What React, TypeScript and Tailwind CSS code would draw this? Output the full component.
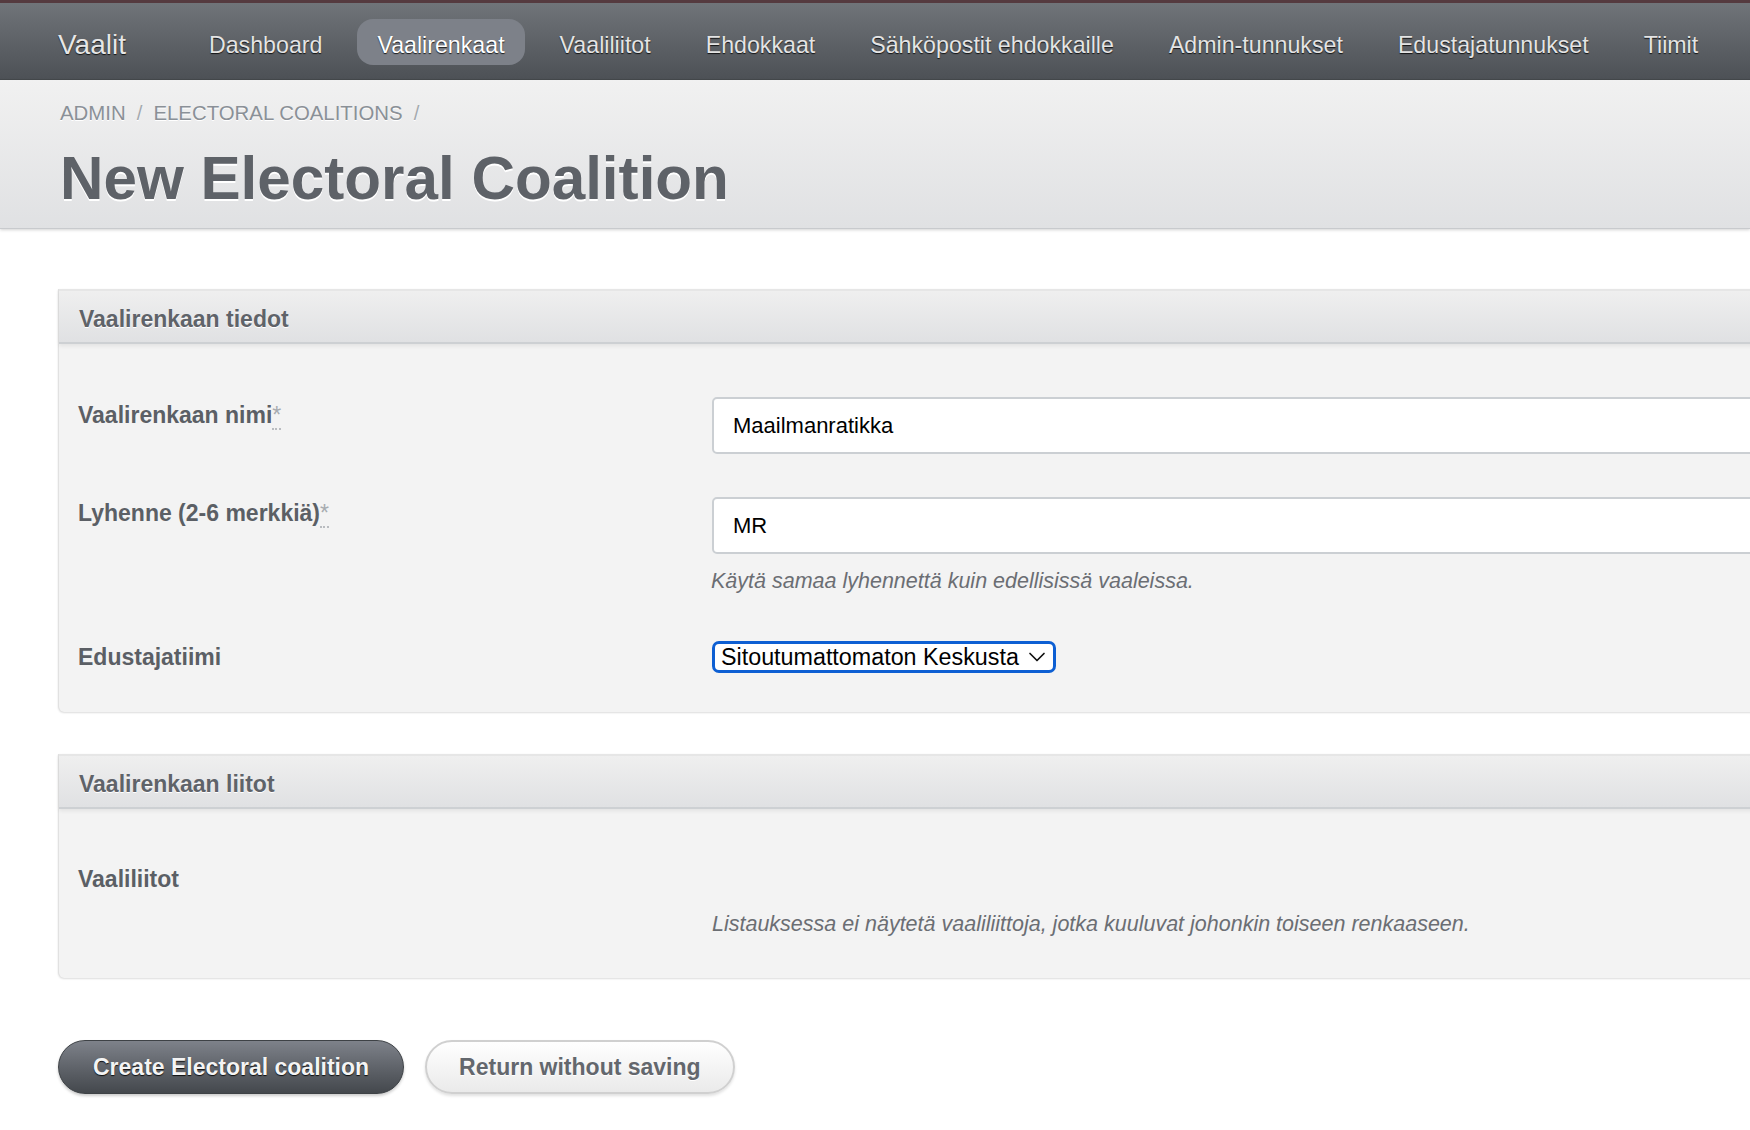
import React from "react";

const navItems = [
  "Dashboard",
  "Vaalirenkaat",
  "Vaaliliitot",
  "Ehdokkaat",
  "Sähköpostit ehdokkaille",
  "Admin-tunnukset",
  "Edustajatunnukset",
  "Tiimit",
];

const Label = ({ text, required }: { text: string; required?: boolean }) => (
  <div className="w-[634px] shrink-0 text-[23px] font-bold leading-[28px] text-[#5b5f65]">
    {text}
    {required && (
      <abbr
        title="required"
        className="no-underline font-normal text-[#a7abb0] border-b-2 border-dotted border-[#b9bcc0]"
      >
        *
      </abbr>
    )}
  </div>
);

const Panel = ({ title, children }: { title: string; children: React.ReactNode }) => (
  <section className="rounded-bl-[6px] bg-[#f3f3f3] border-l border-[#e1e1e1] shadow-[0_1px_2px_rgba(0,0,0,0.14)]">
    <h2 className="h-[55px] flex items-center pt-[5px] px-[20px] bg-linear-to-b from-[#efefef] to-[#e0e1e3] border-t-2 border-t-[#e6e6e6] border-b-2 border-b-[#cdd0d3] shadow-[0_2px_4px_rgba(0,0,0,0.07)] text-[23px] font-bold text-[#5f6369] [text-shadow:0_1px_0_#fff]">
      {title}
    </h2>
    {children}
  </section>
);

const TextInput = ({ value }: { value: string }) => (
  <input
    readOnly
    defaultValue={value}
    className="flex-1 h-[57px] rounded-[5px] border-2 border-[#cbcfd3] bg-white px-[19px] text-[22px] text-black outline-none"
  />
);

const App = () => {
  return (
    <div className="min-h-screen w-full overflow-hidden bg-white font-['Liberation_Sans',Arial,sans-serif]">
      {/* Top bar */}
      <nav className="h-[80px] border-t-[3px] border-[#553a3f] bg-linear-to-b from-[#707479] to-[#4d5156] border-b border-b-[#45494d] flex items-center pl-[58px] whitespace-nowrap">
        <span className="pt-[8px] text-[28px] text-[#e6e6e6] [text-shadow:0_1px_1px_rgba(0,0,0,0.8)]">Vaalit</span>
        <ul className="flex items-center gap-[15px] ml-[63px] pt-[2px]">
          {navItems.map((item) => (
            <li
              key={item}
              className={`h-[46px] flex items-center pt-[7px] px-[20px] rounded-[16px] text-[23.2px] [text-shadow:0_1px_1px_rgba(0,0,0,0.8)] ${
                item === "Vaalirenkaat" ? "bg-[#7d8189] text-white" : "text-[#e4e4e4]"
              }`}
            >
              {item}
            </li>
          ))}
        </ul>
      </nav>

      {/* Page header */}
      <header className="h-[149px] pt-[21px] pl-[60px] bg-linear-to-b from-[#f1f1f1] to-[#e0e1e3] border-b border-[#c8cacd] shadow-[0_1px_3px_rgba(0,0,0,0.18)]">
        <div className="flex items-center h-[24px] text-[20.4px] uppercase text-[#8a9097] [text-shadow:0_1px_0_#fff]">
          <span>Admin</span>
          <span className="mx-[11px] text-[#a4a9ae]">/</span>
          <span>Electoral coalitions</span>
          <span className="mx-[11px] text-[#a4a9ae]">/</span>
        </div>
        <h1 className="mt-[22px] text-[60.2px] leading-[64px] font-bold text-[#5e6268] [text-shadow:0_2px_0_#fff]">
          New Electoral Coalition
        </h1>
      </header>

      {/* Form */}
      <main className="pl-[58px] pt-[60px] pb-[40px]">
        <div className="w-[1720px]">
          <Panel title="Vaalirenkaan tiedot">
            <div className="pt-[53px] pb-[39px] pl-[19px] pr-[20px]">
              <div className="flex items-start">
                <div className="pt-[4px]">
                  <Label text="Vaalirenkaan nimi" required />
                </div>
                <TextInput value="Maailmanratikka" />
              </div>
              <div className="flex items-start mt-[43px]">
                <div className="pt-[2px]">
                  <Label text="Lyhenne (2-6 merkkiä)" required />
                </div>
                <TextInput value="MR" />
              </div>
              <p className="ml-[633px] mt-[14px] italic text-[21.5px] leading-[26px] text-[#6b6e73]">
                Käytä samaa lyhennettä kuin edellisissä vaaleissa.
              </p>
              <div className="flex items-center mt-[47px]">
                <Label text="Edustajatiimi" />
                <div className="h-[32px] w-[344px] flex items-center justify-between pl-[6px] pr-[7px] rounded-[7px] border-[3px] border-[#0d5fd3] bg-white text-[23.3px] text-black">
                  <span>Sitoutumattomaton Keskusta</span>
                  <svg width="18" height="12" viewBox="0 0 18 12" fill="none">
                    <path d="M2 2.5 L9 9.5 L16 2.5" stroke="#111" strokeWidth="1.7" strokeLinecap="round" strokeLinejoin="round" />
                  </svg>
                </div>
              </div>
            </div>
          </Panel>

          <div className="mt-[42px]">
            <Panel title="Vaalirenkaan liitot">
              <div className="pt-[56px] pb-[41px] pl-[19px] flex items-start">
                <Label text="Vaaliliitot" />
                <p className="pt-[46px] italic text-[21.5px] leading-[26px] text-[#6b6e73]">
                  Listauksessa ei näytetä vaaliliittoja, jotka kuuluvat johonkin toiseen renkaaseen.
                </p>
              </div>
            </Panel>
          </div>

          <div className="mt-[62px] flex items-center gap-[21px]">
            <button className="h-[54px] px-[34px] rounded-full border border-[#3e4246] bg-linear-to-b from-[#7e828a] to-[#44484d] text-[23px] font-bold text-[#f4f4f4] [text-shadow:0_1px_1px_rgba(0,0,0,0.85)] shadow-[0_2px_3px_rgba(0,0,0,0.2)]">
              Create Electoral coalition
            </button>
            <button className="h-[54px] px-[32px] rounded-full border-2 border-[#d0d0d0] bg-linear-to-b from-[#ffffff] to-[#eaeaea] text-[23px] font-bold text-[#63676d] [text-shadow:0_1px_0_#fff] shadow-[0_2px_3px_rgba(0,0,0,0.12)]">
              Return without saving
            </button>
          </div>
        </div>
      </main>
    </div>
  );
};

export default App;
